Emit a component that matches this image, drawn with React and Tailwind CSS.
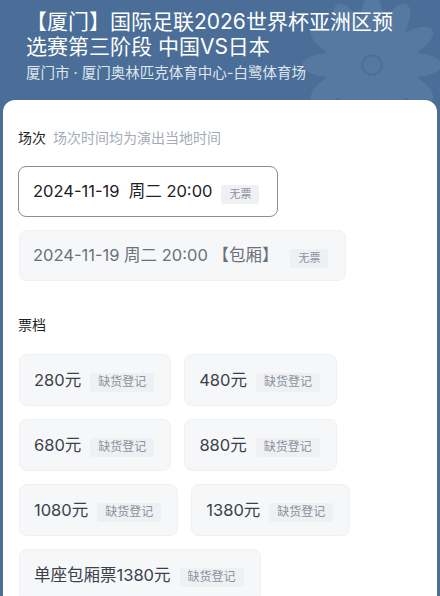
import React from "react";

const font = { fontFamily: 'Inter, "Noto Sans CJK SC", "Noto Sans", sans-serif' };

function Badge({ children, size = "text-[11px]" }) {
  return (
    <span className={`inline-flex items-center h-[19px] px-[8px] rounded-[3px] bg-[#eff0f3] leading-none text-[#8d929b] ${size}`}>
      {children}
    </span>
  );
}

function PriceBox({ label }) {
  return (
    <div className="h-[52px] flex items-center pl-[14px] pr-[16px] rounded-[8px] bg-[#f6f7f9] border border-[#eef0f2]">
      <span className="text-[16.5px] text-[#3c4149] whitespace-nowrap">{label}</span>
      <span className="ml-[9px]">
        <Badge size="text-[12px]">缺货登记</Badge>
      </span>
    </div>
  );
}

function Flower() {
  const petals = [];
  for (let i = 0; i < 12; i++) {
    petals.push(
      <ellipse
        key={i}
        cx="0"
        cy="-40"
        rx="12"
        ry="30"
        transform={`rotate(${i * 30})`}
      />
    );
  }
  return (
    <svg
      className="absolute left-[297px] top-[-10px] pointer-events-none"
      width="150"
      height="150"
      viewBox="-75 -75 150 150"
    >
      <g fill="#7696bb" opacity="0.28">{petals}</g>
      <circle cx="0" cy="0" r="9" fill="#7696bb" opacity="0.25" />
    </svg>
  );
}

export default function App() {
  return (
    <div
      className="relative w-[440px] h-[596px] overflow-hidden bg-[#4a6e97]"
      style={font}
    >
      <Flower />
      <div className="relative pt-[9px] px-[26px]">
        <div className="text-[21px] leading-[25px] text-white whitespace-nowrap">
          <div>【厦门】国际足联2026世界杯亚洲区预</div>
          <div>选赛第三阶段 中国VS日本</div>
        </div>
        <div className="mt-[4px] text-[14.5px] leading-[20px] text-[#dfe6ef] whitespace-pre">
          厦门市 · 厦门奥林匹克体育中心-白鹭体育场
        </div>
      </div>

      <div className="relative mt-[17px] mx-[3px] h-[600px] bg-white rounded-t-[12px] px-[15px] pt-[28px]">
        <div className="flex items-center text-[14px] leading-[20px]">
          <span className="text-[#222]">场次</span>
          <span className="ml-[7px] text-[#a5abb6]">场次时间均为演出当地时间</span>
        </div>

        <div className="mt-[18px] flex flex-col items-start gap-[13px]">
          <div className="h-[51px] flex items-center pl-[14px] pr-[18px] rounded-[8px] border border-[#8a8f98] bg-white">
            <span className="text-[16.5px] text-[#1f2024] whitespace-pre">
              2024-11-19  周二 20:00
            </span>
            <span className="ml-[9px]">
              <Badge>无票</Badge>
            </span>
          </div>
          <div className="ml-[1px] h-[51px] flex items-center pl-[13px] pr-[17px] rounded-[8px] border border-[#eef0f2] bg-[#f6f7f9]">
            <span className="text-[16.5px] text-[#6c7078] whitespace-pre">
              2024-11-19 周二 20:00 【包厢】
            </span>
            <span className="ml-[12px]">
              <Badge>无票</Badge>
            </span>
          </div>
        </div>

        <div className="mt-[34px] text-[14px] leading-[20px] text-[#222]">票档</div>

        <div className="mt-[19px] ml-[1px] flex flex-col gap-[13px]">
          <div className="flex gap-[13px]">
            <PriceBox label="280元" />
            <PriceBox label="480元" />
          </div>
          <div className="flex gap-[13px]">
            <PriceBox label="680元" />
            <PriceBox label="880元" />
          </div>
          <div className="flex gap-[13px]">
            <PriceBox label="1080元" />
            <PriceBox label="1380元" />
          </div>
          <div className="flex gap-[13px]">
            <PriceBox label="单座包厢票1380元" />
          </div>
        </div>
      </div>
    </div>
  );
}
